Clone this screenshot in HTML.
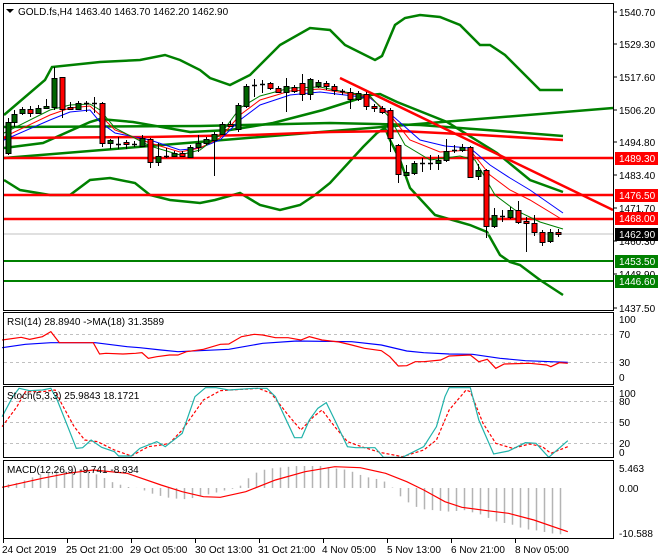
<!DOCTYPE html>
<html><head><meta charset="utf-8">
<style>
html,body{margin:0;padding:0;background:#fff;}
body{width:660px;height:560px;overflow:hidden;position:relative;font-family:"Liberation Sans",Arial,sans-serif;font-size:10px;color:#000;}
svg{position:absolute;left:0;top:0;}
</style></head>
<body>
<svg id="s" width="660" height="560" xmlns="http://www.w3.org/2000/svg" font-family="Liberation Sans, Arial, sans-serif" font-size="10">
<rect x="0" y="0" width="660" height="560" fill="#fff"/>
<g id="g"></g>
<g fill="none" stroke="#000" stroke-width="1">
<rect x="3.5" y="3.5" width="610" height="307"/>
<rect x="3.5" y="312.5" width="610" height="72"/>
<rect x="3.5" y="386.5" width="610" height="71"/>
<rect x="3.5" y="460.5" width="610" height="78"/>
</g>
<path d="M6,9 L14,9 L10,13 Z" fill="#000"/>
<text x="18" y="15">GOLD.fs,H4  1463.40 1463.70 1462.20 1462.90</text>
<text x="7" y="325">RSI(14) 28.8940  -&gt;MA(18) 31.3589</text>
<text x="7" y="399">Stoch(5,3,3) 25.9843 18.1721</text>
<text x="7" y="473">MACD(12,26,9) -9.741 -8.934</text>
<g>
<text x="619" y="16">1540.70</text>
<text x="619" y="48">1529.30</text>
<text x="619" y="81">1517.60</text>
<text x="619" y="114">1506.20</text>
<text x="619" y="146">1494.80</text>
<text x="619" y="179">1483.40</text>
<text x="619" y="212">1471.70</text>
<text x="619" y="245">1460.30</text>
<text x="619" y="278">1448.90</text>
<text x="619" y="312">1437.50</text>
<rect x="615" y="152" width="43" height="13" fill="#f00"/><text x="619" y="162" fill="#fff">1489.30</text>
<rect x="615" y="189" width="43" height="13" fill="#f00"/><text x="619" y="199" fill="#fff">1476.50</text>
<rect x="615" y="212" width="43" height="13" fill="#f00"/><text x="619" y="222" fill="#fff">1468.00</text>
<rect x="615" y="228" width="43" height="13" fill="#000"/><text x="619" y="238" fill="#fff">1462.90</text>
<rect x="615" y="255" width="43" height="13" fill="#008000"/><text x="619" y="265" fill="#fff">1453.50</text>
<rect x="615" y="275" width="43" height="13" fill="#008000"/><text x="619" y="285" fill="#fff">1446.60</text>
<text x="619" y="323">100</text>
<text x="619" y="338">70</text>
<text x="619" y="366">30</text>
<text x="619" y="381">0</text>
<text x="619" y="397">100</text>
<text x="619" y="405">80</text>
<text x="619" y="426">50</text>
<text x="619" y="447">20</text>
<text x="619" y="456">0</text>
<text x="619" y="472">5.463</text>
<text x="619" y="492">0.00</text>
<text x="619" y="537">-10.588</text>
</g>
<g>
<text x="2" y="553">24 Oct 2019</text>
<text x="66" y="553">25 Oct 21:00</text>
<text x="130" y="553">29 Oct 05:00</text>
<text x="195" y="553">30 Oct 13:00</text>
<text x="258" y="553">31 Oct 21:00</text>
<text x="322" y="553">4 Nov 05:00</text>
<text x="387" y="553">5 Nov 13:00</text>
<text x="451" y="553">6 Nov 21:00</text>
<text x="515" y="553">8 Nov 05:00</text>
</g>
</svg>
<script>
var g=document.getElementById('g');var NS='http://www.w3.org/2000/svg';
function el(t,a){var e=document.createElementNS(NS,t);for(var k in a)e.setAttribute(k,a[k]);g.appendChild(e);return e;}
function pl(p,c,w,d){var s='';for(var i=0;i<p.length;i+=2)s+=p[i]+','+p[i+1]+' ';var a={points:s,fill:'none',stroke:c,'stroke-width':w};if(d)a['stroke-dasharray']=d;el('polyline',a);}
function L(x1,y1,x2,y2,c,w,d){var a={x1:x1,y1:y1,x2:x2,y2:y2,stroke:c,'stroke-width':w};if(d)a['stroke-dasharray']=d;el('line',a);}
var ty=[12,44,77,110,142,175,208,241,274,308];ty.forEach(function(y){L(613,y,617,y,'#000',1);});
[3,67,131,195,259,323,387,451,515].forEach(function(x){L(x+0.5,538,x+0.5,543,'#000',1);});
pl([4,115,45,80,52,67,100,62,140,60,165,55,180,60,200,70,210,78,230,85,250,75,280,45,310,28,330,30,345,45,375,60,382,56,395,25,405,18,420,15,440,17,460,25,480,45,490,45,505,55,530,80,540,90,563,90],'#008000',2.5);
pl([4,180,20,190,50,195,70,195,90,180,110,178,135,183,150,195,170,200,200,203,215,200,240,193,260,205,280,210,300,205,315,195,330,183,363,147,377,133,385,128,390,140,400,160,410,188,435,215,470,225,487,232,500,255,510,262,520,265,540,280,563,295],'#008000',2.5);
pl([4,148,43,143,90,122,100,119,133,122,190,132,230,130,273,123,323,110,370,95,380,94,397,102,447,122,497,153,530,180,563,192],'#008000',2.5);
pl([4,127,200,126,330,123,420,125,500,131,563,136],'#008000',2.5);
L(4,158,613,108,'#008000',2.5);
pl([4,138,150,137,250,135,330,132,400,131,480,135,563,140],'#ff0000',2.5);
L(4,158,613,158,'#ff0000',2.5);L(4,195,613,195,'#ff0000',2.5);L(4,219,613,219,'#ff0000',2.5);
L(4,261,613,261,'#008000',2);L(4,281,613,281,'#008000',2);
L(4,234,613,234,'#c0c0c0',1);
L(340,78,613,210,'#ff0000',2.5);
pl([4,140,50,120,70,112,90,110,100,122,115,133,150,140,180,150,200,148,220,140,240,120,260,105,290,95,320,92,345,95,370,98,395,118,420,140,445,146,470,148,490,165,510,178,530,190,563,213],'#0000ff',1);
pl([4,137,50,115,70,108,90,106,100,115,115,130,150,143,180,152,200,148,220,138,240,115,260,100,290,91,320,89,345,93,370,97,390,115,410,140,440,152,470,150,490,175,510,190,530,200,563,220],'#ff0000',1);
pl([4,133,50,110,70,105,90,104,100,110,115,128,150,146,180,155,200,150,220,135,240,108,260,96,290,88,320,87,345,92,370,96,390,118,405,145,430,160,460,156,475,160,495,195,515,210,540,222,563,229],'#008000',1);
var C=[[5,153,122,118,155],[11,122,114,110,127],[19,113,109,107,115],[27,109,113,106,117],[35,113,108,105,114],[43,108,106,99,109],[51,107,78,67,110],[59,77,109,77,118],[67,107,109,102,110],[75,109,103,101,110],[83,104,103,101,112],[91,104,103,97,113],[99,103,143,102,147],[107,143,140,139,149],[115,144,144,137,149],[123,142,144,140,149],[131,145,144,141,147],[139,146,138,135,147],[147,139,162,138,168],[155,162,156,143,166],[163,156,156,148,158],[171,156,153,151,157],[179,153,156,151,157],[187,157,147,145,158],[195,147,143,135,152],[203,143,139,137,145],[211,140,134,132,176],[219,134,124,122,135],[227,124,126,121,127],[235,129,105,103,132],[243,106,86,84,108],[251,86,85,79,97],[259,85,84,80,93],[267,83,88,82,90],[275,88,92,86,93],[283,92,86,78,112],[291,87,91,85,93],[299,83,94,74,101],[307,94,79,78,100],[315,86,82,80,88],[323,83,86,81,90],[331,86,90,84,95],[339,91,92,89,95],[347,92,99,88,109],[355,99,93,91,101],[363,94,106,92,110],[371,106,108,104,112],[379,108,112,106,114],[387,110,138,108,152],[395,145,174,144,183],[403,175,172,165,176],[411,173,163,161,175],[419,163,164,158,172],[427,164,163,155,170],[435,163,160,155,170],[443,160,151,139,162],[451,151,150,145,153],[459,150,147,144,152],[467,147,177,146,178],[475,176,170,164,180],[483,170,226,169,238],[491,226,215,208,228],[499,217,216,210,222],[507,217,210,207,219],[515,210,222,201,224],[523,221,223,217,252],[531,223,232,215,236],[539,232,242,230,246],[547,241,232,229,243],[555,232,234,229,237]];
C.forEach(function(c){var x=c[0]+3,up=c[2]<c[1];var t=Math.min(c[1],c[2]),b=Math.max(c[1],c[2]);
L(x+0.5,c[3],x+0.5,c[4],'#000',1);
if(b-t<1.5){L(x-2,t+0.5,x+3,t+0.5,'#000',1.5);}else el('rect',{x:x-2,y:t+0.5,width:5,height:b-t,fill:up?'#006400':'#ff0000',stroke:'#000','stroke-width':1});});
L(4,334.5,613,334.5,'#c0c0c0',1,'3,3');L(4,362.5,613,362.5,'#c0c0c0',1,'3,3');
function cv(a,sx){var r=[];for(var i=0;i<a.length;i+=2){r.push(a[i]/sx);r.push(a[i+1]/3+300);}return r;}
pl(cv([5,143,60,133,120,128,225,128,300,140,330,143,380,150,420,155,470,152,540,148,620,130,700,123,830,125,900,135,960,153,1000,158,1060,162,1115,163,1180,175,1240,182,1300,185,1340,187],2.36),'#0000ff',1.2);
pl(cv([5,120,50,112,70,118,100,110,120,95,140,128,165,128,220,128,235,162,250,160,290,162,320,160,335,158,350,175,370,170,400,165,420,165,440,155,480,148,520,133,540,132,570,110,600,103,620,105,650,113,680,113,710,120,730,110,760,120,800,126,830,135,860,145,900,152,920,170,940,198,960,197,980,185,1000,185,1040,180,1060,168,1110,165,1130,185,1150,178,1170,205,1190,192,1250,190,1290,195,1300,200,1320,188,1340,190],2.36),'#ff0000',1.2);
[401.5,422.5,443.5].forEach(function(y){L(4,y,613,y,'#c0c0c0',1,'3,3');});
pl(cv([5,380,40,320,60,275,100,275,130,270,145,310,175,380,200,420,230,425,270,450,310,468,350,440,380,435,400,430,430,390,480,300,520,272,610,265,640,280,680,345,710,390,740,350,760,330,790,380,820,425,860,443,900,458,950,470,1000,450,1030,420,1060,330,1100,270,1110,275,1140,370,1170,430,1210,445,1250,432,1280,440,1300,460,1340,440],2.36),'#ff0000',1.2,'3,2');
pl(cv([5,350,30,290,45,265,70,272,100,270,120,265,135,300,160,380,180,445,195,443,215,420,240,442,270,455,280,468,310,468,330,445,370,425,390,440,430,400,460,290,485,263,510,263,540,270,600,265,630,265,650,290,670,345,695,413,712,413,730,360,750,325,770,308,790,360,820,440,840,443,885,443,905,472,950,472,1000,440,1030,380,1050,290,1060,263,1110,263,1130,360,1165,462,1200,453,1240,428,1265,430,1295,472,1340,422],2.36),'#20b2aa',1.2);
var H=[[10,553],[30,552],[60,540],[100,520],[140,512],[200,510],[220,520],[240,530],[260,545],[275,550],[295,560],[330,565],[350,578],[370,585],[390,592],[410,595],[430,598],[450,595],[470,590],[500,580],[520,575],[540,567],[560,565],[580,540],[600,520],[620,510],[640,505],[700,498],[760,498],[790,505],[820,510],[840,520],[860,530],[880,535],[900,540],[920,555],[940,585],[960,605],[980,620],[1000,628],[1060,635],[1100,630],[1120,640],[1140,645],[1160,660],[1180,668],[1200,670],[1220,680],[1240,688],[1260,690],[1280,695],[1300,700],[1320,703],[1340,700]];
function hv(x){x=x*2.36;for(var i=1;i<H.length;i++){if(x<=H[i][0]){var a=H[i-1],b=H[i];var t=(x-a[0])/(b[0]-a[0]);return (a[1]+t*(b[1]-a[1]))/3+300;}}return H[H.length-1][1]/3+300;}
for(var x=8;x<=566;x+=8){var y=hv(x);L(x+0.5,488,x+0.5,y,'#b4b4b4',1.5);}
pl(cv([5,562,100,535,160,520,220,510,300,520,380,555,430,575,480,590,520,592,580,575,650,540,720,515,790,500,850,503,910,520,960,545,1000,570,1050,605,1090,622,1150,632,1200,640,1260,660,1340,695],2.36),'#ff0000',1.2);
</script>
</body></html>
